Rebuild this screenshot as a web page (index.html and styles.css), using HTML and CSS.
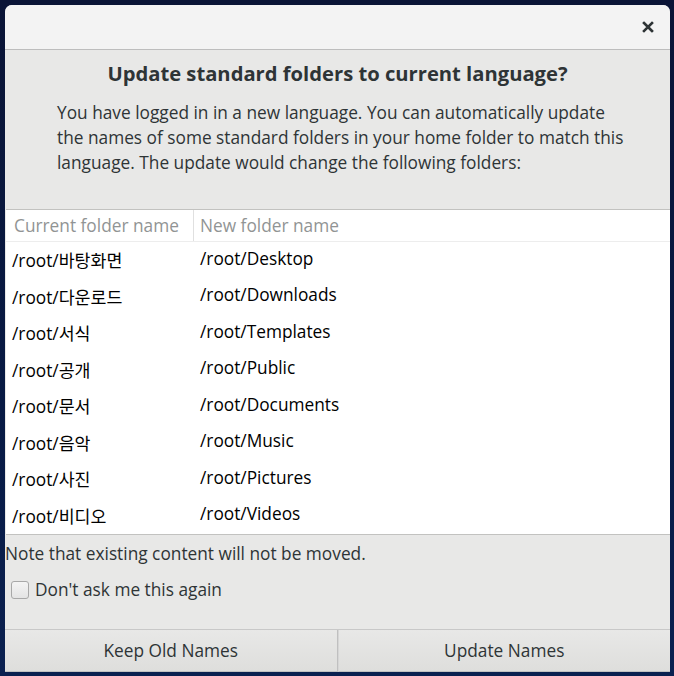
FILE: index.html
```html
<!DOCTYPE html>
<html>
<head>
<meta charset="utf-8">
<link rel="stylesheet" href="styles.css">
</head>
<body>
<div class="dialog">
  <div class="titlebar">
    <span class="close">
      <svg width="12" height="12" viewBox="0 0 12 12"><path d="M2 2 L10 10 M10 2 L2 10" stroke="#2e3436" stroke-width="2.6" stroke-linecap="square"/></svg>
    </span>
  </div>
  <div class="body">
    <h1 class="heading">Update standard folders to current language?</h1>
    <p class="message">You have logged in in a new language. You can automatically update the names of some standard folders in your home folder to match this language. The update would change the following folders:</p>
    <div class="tree">
      <div class="tree-head">
        <div class="col1">Current folder name</div>
        <div class="col2">New folder name</div>
      </div>
      <div class="row"><div class="col1">/root/바탕화면</div><div class="col2">/root/Desktop</div></div>
      <div class="row"><div class="col1">/root/다운로드</div><div class="col2">/root/Downloads</div></div>
      <div class="row"><div class="col1">/root/서식</div><div class="col2">/root/Templates</div></div>
      <div class="row"><div class="col1">/root/공개</div><div class="col2">/root/Public</div></div>
      <div class="row"><div class="col1">/root/문서</div><div class="col2">/root/Documents</div></div>
      <div class="row"><div class="col1">/root/음악</div><div class="col2">/root/Music</div></div>
      <div class="row"><div class="col1">/root/사진</div><div class="col2">/root/Pictures</div></div>
      <div class="row"><div class="col1">/root/비디오</div><div class="col2">/root/Videos</div></div>
    </div>
    <p class="note">Note that existing content will not be moved.</p>
    <label class="check"><span class="box"></span>Don't ask me this again</label>
  </div>
  <div class="actions">
    <button class="btn">Keep Old Names</button>
    <button class="btn">Update Names</button>
  </div>
</div>
</body>
</html>
```
FILE: styles.css
```css
html, body {
  margin: 0;
  padding: 0;
  height: 100%;
}
body {
  background: linear-gradient(180deg, #0a1436 0%, #081a44 60%, #0a2050 100%);
  font-family: "Open Sans", "Noto Sans CJK KR", sans-serif;
  font-size: 17.3px;
  color: #2e3436;
  padding: 5px 4px 4px 5px;
  box-sizing: border-box;
}
.dialog {
  width: 665px;
  height: 667px;
  background: #e8e8e7;
  border-radius: 7px 7px 0 0;
  display: flex;
  flex-direction: column;
  overflow: hidden;
}
.titlebar {
  height: 45px;
  flex: none;
  background: #f3f3f3;
  border-bottom: 1px solid #bdbdbd;
  box-sizing: border-box;
  display: flex;
  justify-content: flex-end;
  align-items: center;
  padding-right: 16px;
}
.close {
  display: flex;
  width: 12px;
  height: 12px;
}
.body {
  flex: 1;
  display: flex;
  flex-direction: column;
}
.heading {
  margin: 10px 0 0;
  font-size: 20.2px;
  font-weight: bold;
  text-align: center;
  line-height: 26px;
}
.message {
  margin: 13.5px 40px 0 52px;
  line-height: 25px;
}
.tree {
  margin-top: 34px;
  background: #fff;
  border-top: 1px solid #c2c2c0;
  border-bottom: 1px solid #c2c2c0;
  margin-left: 1px;
}
.tree-head {
  display: flex;
  height: 31px;
  border-bottom: 1px solid #ededed;
  color: #919494;
  align-items: center;
}
.tree-head .col1 {
  border-right: 1px solid #e0e0e0;
  height: 100%;
  display: flex;
  align-items: center;
}
.col1 {
  width: 188px;
  padding-left: 8px;
  box-sizing: border-box;
  flex: none;
}
.col2 {
  padding-left: 6px;
}
.row {
  display: flex;
  height: 36.5px;
  align-items: center;
  color: #000;
}
.row .col1 {
  padding-left: 6px;
}
.row .col2 {
  margin-top: -3px;
}
.note {
  margin: 7px 0 0 0;
  line-height: 24px;
}
.check {
  display: flex;
  align-items: center;
  margin: 12px 0 0 6px;
  line-height: 24px;
}
.box {
  width: 16px;
  height: 16px;
  border: 1px solid #a8a8a8;
  border-radius: 3px;
  background: linear-gradient(#f4f4f4, #e4e4e4);
  margin-right: 6px;
}
.actions {
  flex: none;
  display: flex;
  height: 42px;
  border-top: 1px solid #c8c8c8;
}
.btn {
  flex: 1;
  font: inherit;
  color: #2e3436;
  background: linear-gradient(#e8e8e7, #dededc);
  border: none;
  border-right: 1px solid #c0c0c0;
  border-bottom: 1px solid #c0c0c0;
  padding: 0;
}
.btn:last-child {
  border-right: none;
  border-left: 1px solid #d6d6d6;
}
```
